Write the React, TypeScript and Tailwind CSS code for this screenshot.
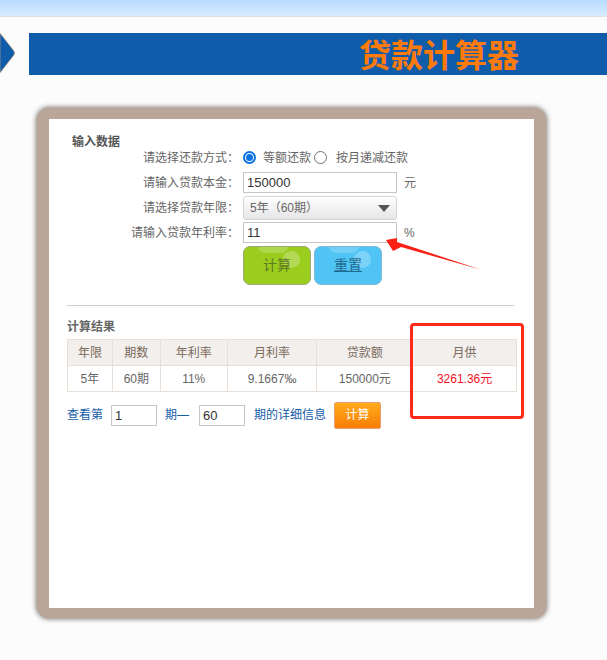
export default function App() {
  const cjk = { fontFamily: '"Liberation Sans","Noto Sans CJK SC",sans-serif' };
  const label = "text-right w-[173px] shrink-0 pr-[1px]";
  const cols = ["w-[45px]", "w-[48px]", "w-[67px]", "w-[90px]", "w-[96px]", "w-[104px]"];
  const head = ["年限", "期数", "年利率", "月利率", "贷款额", "月供"];
  const row = ["5年", "60期", "11%", "9.1667‰", "150000元", "3261.36元"];
  return (
    <div style={cjk} className="relative w-[607px] h-[660px] overflow-hidden bg-[#fcfcfc] text-[12px] text-[#666]">
      <div className="h-[17px] bg-gradient-to-b from-[#b9dcfd] to-[#d6ebff] border-b border-[#dfe3e6] overflow-hidden flex justify-end pr-[65px]">
        <span className="text-[12px] leading-[12px] -mt-[11px] text-black tracking-[1px]">0 0 人 0 人</span>
      </div>
      <div className="flex items-stretch mt-[16px] h-[42px]">
        <svg width="25" height="42" viewBox="0 0 25 42" className="shrink-0">
          <path d="M0 0 L14 18 Q15.5 20 14 22 L0 40 Z" fill="#0f5daa" stroke="#ffb060" strokeWidth="0.5" />
        </svg>
        <div className="ml-[4px] flex-1 bg-[#0f5daa] flex justify-end pr-[88px] items-center">
          <span className="text-[32px] font-bold text-[#ff7a0a] leading-none mt-[4px]">贷款计算器</span>
        </div>
      </div>
      <div className="ml-[37px] mt-[33px] w-[509px] h-[510px] rounded-[12px] bg-[#b9a698] pt-[11px] pl-[12px] shadow-[0_0_5px_1px_rgba(60,50,40,0.65)]">
        <div className="w-[485px] h-[489px] bg-white pl-[18px] pt-[16px]">
          <div className="text-[12px] font-bold text-[#555] ml-[5px] leading-[14px]">输入数据</div>
          <div className="flex flex-col">
            <div className="flex items-center h-[17px]">
              <div className={label}>请选择还款方式：</div>
              <div className="ml-[3px] flex items-center">
                <span className="w-[13px] h-[13px] rounded-full border-2 border-[#0b72e6] bg-white flex items-center justify-center">
                  <span className="w-[7px] h-[7px] rounded-full bg-[#0b72e6]" />
                </span>
                <span className="ml-[7px]">等额还款</span>
                <span className="ml-[3px] w-[13px] h-[13px] rounded-full border border-[#767676] bg-white" />
                <span className="ml-[9px]">按月递减还款</span>
              </div>
            </div>
            <div className="flex items-center h-[21px] mt-[6px]">
              <div className={label}>请输入贷款本金：</div>
              <div className="ml-[3px] w-[154px] h-[21px] border border-[#c6c6c6] bg-white text-[13px] leading-[19px] text-[#333] pl-[3px]">150000</div>
              <span className="ml-[7px]">元</span>
            </div>
            <div className="flex items-center h-[24px] mt-[3px]">
              <div className={label}>请选择贷款年限：</div>
              <div className="ml-[3px] w-[154px] h-[24px] border border-[#d5d5d5] rounded-[3px] bg-gradient-to-b from-[#ffffff] to-[#e6e6e6] pl-[6px] flex items-center justify-between pr-[6px]">
                <span>5年（60期）</span>
                <svg width="12" height="7" viewBox="0 0 12 7"><path d="M0 0H12L6 7Z" fill="#555" /></svg>
              </div>
            </div>
            <div className="flex items-center h-[21px] mt-[2px]">
              <div className={label}>请输入贷款年利率：</div>
              <div className="ml-[3px] w-[154px] h-[21px] border border-[#c6c6c6] bg-white text-[13px] leading-[19px] text-[#333] pl-[3px]">11</div>
              <span className="ml-[7px]">%</span>
            </div>
            <div className="flex mt-[3px] ml-[176px] gap-[3px]">
              <div className="relative overflow-hidden w-[68px] h-[39px] rounded-[7px] border border-[#9aaa78] bg-[#9acd1e] flex items-center justify-center text-[14px] text-[#5f7a22]">
                <span className="absolute -top-[8px] left-[14px] w-[30px] h-[14px] rounded-full bg-white/20" />
                <span className="absolute top-[4px] left-[39px] w-[17px] h-[17px] rounded-full bg-white/25" />
                <span className="relative">计算</span>
              </div>
              <div className="relative overflow-hidden w-[68px] h-[39px] rounded-[7px] border border-[#84b8d8] bg-[#50c4f5] flex items-center justify-center text-[14px] text-[#1f6a8f]">
                <span className="absolute -top-[8px] left-[14px] w-[30px] h-[14px] rounded-full bg-white/20" />
                <span className="absolute top-[4px] left-[39px] w-[17px] h-[17px] rounded-full bg-white/25" />
                <span className="relative underline">重置</span>
              </div>
            </div>
          </div>
          <div className="mt-[20px] w-[447px] h-px bg-[#cfcfcf]" />
          <div className="mt-[14px] font-bold text-[#666] leading-[14px]">计算结果</div>
          <div className="mt-[5px] w-[450px] border border-[#e6e0d9] border-b-0 border-r-0">
            <div className="flex h-[26px] bg-[#f2efec] text-[#7a6a5c] border-b border-[#e6e0d9]">
              {head.map((t, i) => (
                <div key={t} className={`${cols[i]} flex items-center justify-center border-r border-[#e6e0d9]`}>{t}</div>
              ))}
            </div>
            <div className="flex h-[26px] border-b border-[#e6e0d9]">
              {row.map((t, i) => (
                <div key={t} className={`${cols[i]} flex items-center justify-center border-r border-[#e6e0d9] ${i === 5 ? "text-[#f5121e]" : ""}`}>{t}</div>
              ))}
            </div>
          </div>
          <div className="mt-[9px] flex items-center text-[#1560a8] h-[28px]">
            <span>查看第</span>
            <div className="ml-[8px] w-[46px] h-[21px] border border-[#c6c6c6] text-[13px] leading-[19px] text-[#333] pl-[3px]">1</div>
            <span className="ml-[8px]">期—</span>
            <div className="ml-[10px] w-[46px] h-[21px] border border-[#c6c6c6] text-[13px] leading-[19px] text-[#333] pl-[3px]">60</div>
            <span className="ml-[9px]">期的详细信息</span>
            <div className="ml-[8px] w-[47px] h-[27px] rounded-[2px] border border-[#e8a070] bg-gradient-to-b from-[#ffab1c] to-[#f87c04] text-white flex items-center justify-center">计算</div>
          </div>
        </div>
      </div>
      <div className="absolute left-[410px] top-[323px] w-[114px] h-[96px] border-[3px] border-[#ff2a1a] rounded-[4px]" />
      <svg className="absolute left-[380px] top-[230px]" width="110" height="50" viewBox="0 0 110 50">
        <path d="M6 10 L17 8 L17 12 L102 40 L21 17 L13 21 Z" fill="#fb1f14" />
      </svg>
    </div>
  );
}
